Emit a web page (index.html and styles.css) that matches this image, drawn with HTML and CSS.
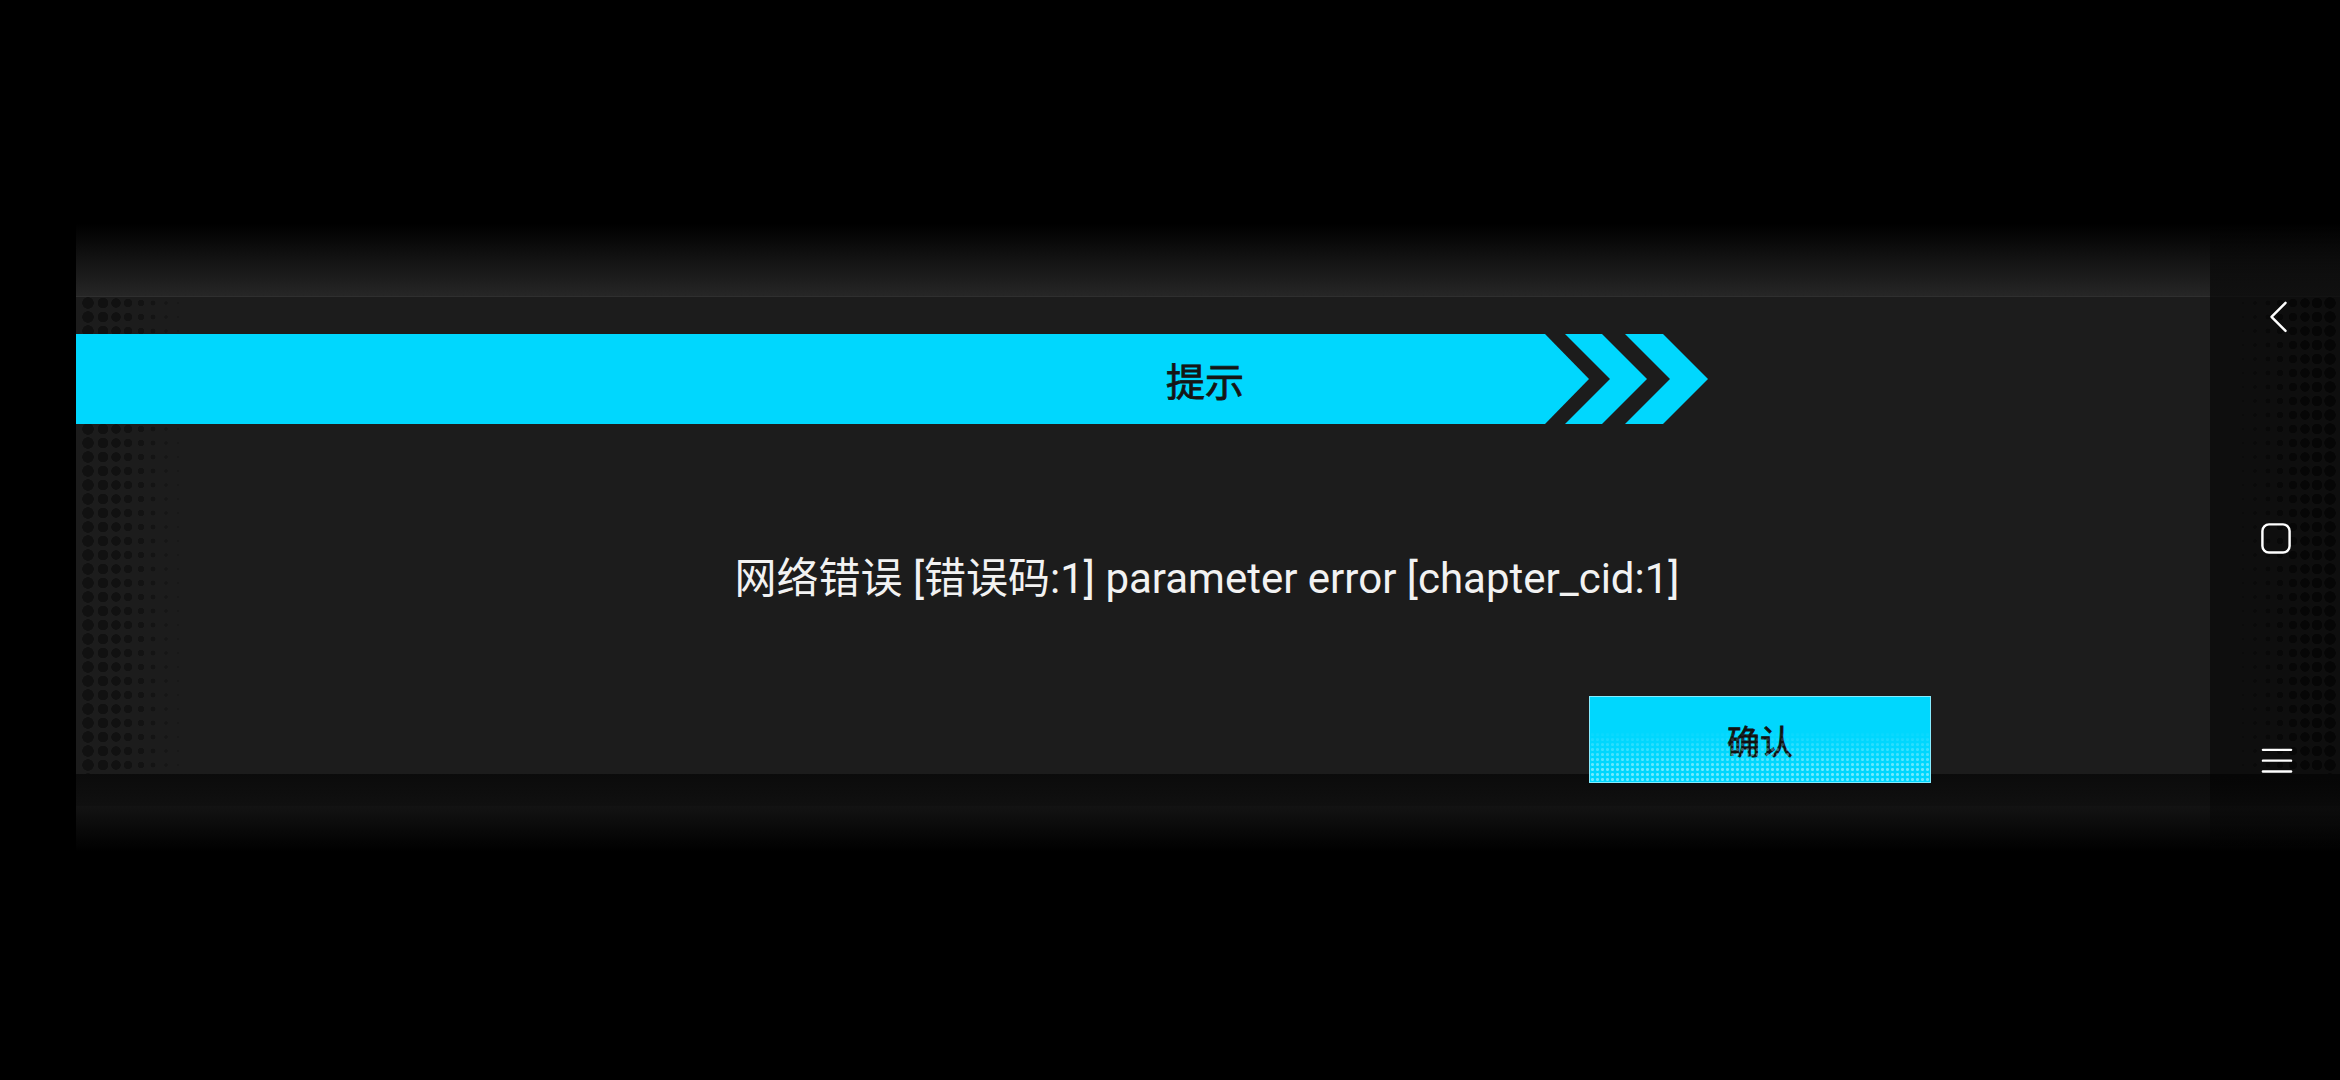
FILE: index.html
```html
<!DOCTYPE html>
<html lang="zh-CN">
<head>
  <meta charset="UTF-8">
  <meta name="viewport" content="width=device-width, initial-scale=1.0">
  <title>提示</title>
  <link rel="stylesheet" href="styles.css">
</head>
<body>
  <div class="screen">
    <div class="game">
      <div class="top-band"></div>
      <div class="panel">
        <div class="title-bar">
          <div class="title-main"><span class="title-text">提示</span></div>
          <svg class="title-arrows" width="163" height="90" viewBox="0 0 163 90">
            <polygon points="20,0 57,0 102,45 57,90 20,90 65,45"/>
            <polygon points="80,0 118,0 163,45 118,90 80,90 125,45"/>
          </svg>
        </div>
        <p class="message">网络错误 [错误码:1] parameter error [chapter_cid:1]</p>
        <button class="btn-ok">确认</button>
      </div>
      <div class="bottom-band"></div>
      <div class="bottom-fade"></div>
    </div>

    <div class="nav">
      <div class="nav-top"></div>
      <div class="nav-body">
        <svg class="nav-back" width="20" height="34" viewBox="0 0 20 34">
          <polyline points="17,2 2,17 17,32"/>
        </svg>
        <svg class="nav-home" width="32" height="33" viewBox="0 0 32 33">
          <rect x="1.5" y="1.5" width="29" height="30" rx="7"/>
        </svg>
        <svg class="nav-menu" width="32" height="28" viewBox="0 0 32 28">
          <line x1="1" y1="2" x2="31" y2="2"/>
          <line x1="1" y1="13.5" x2="31" y2="13.5"/>
          <line x1="1" y1="25" x2="31" y2="25"/>
        </svg>
      </div>
      <div class="nav-bottom"></div>
    </div>
  </div>
</body>
</html>
```

FILE: styles.css
```css
* {
  box-sizing: border-box;
}

body {
  margin: 0;
  padding: 0;
  width: 2340px;
  height: 1080px;
  overflow: hidden;
  background-color: #000;
  font-family: Roboto, "Noto Sans CJK SC", sans-serif;
}

.screen {
  position: relative;
  height: 1080px;
  padding-top: 224px;
}

.game {
  margin-left: 76px;
}

.top-band {
  height: 73px;
  background: linear-gradient(#000, #262626);
  border-bottom: 1px solid #2f2f2f;
}

/* halftone dots fading to the right */
.panel {
  height: 477px;
  padding-top: 37px;
  background-color: #1c1c1c;
  background-image:
    radial-gradient(circle at 7px 7px, #111 5.5px, transparent 6px),
    radial-gradient(circle at 7px 7px, #111 5px, transparent 5.5px),
    radial-gradient(circle at 7px 7px, #111 4.5px, transparent 5px),
    radial-gradient(circle at 7px 7px, #121212 4px, transparent 4.5px),
    radial-gradient(circle at 7px 7px, #131313 3px, transparent 3.5px),
    radial-gradient(circle at 7px 7px, #141414 2.2px, transparent 2.7px),
    radial-gradient(circle at 7px 7px, #161616 1.5px, transparent 2px),
    radial-gradient(circle at 7px 7px, #181818 1px, transparent 1.5px);
  background-size: 14px 14px;
  background-repeat: repeat-y;
  background-position: 5px -1px, 20px -1px, 33px -1px, 45px -1px, 58px -1px, 70px -1px, 83px -1px, 95px -1px;
}

.title-bar {
  display: flex;
  height: 90px;
}

.title-main {
  display: flex;
  align-items: center;
  width: 1513px;
  height: 90px;
  padding-left: 1090px;
  background-color: #00d7fe;
  clip-path: polygon(0 0, 1469px 0, 100% 50%, 1469px 100%, 0 100%);
}

.title-text {
  font-family: "Noto Sans CJK SC", sans-serif;
  font-size: 39px;
  font-weight: 400;
  -webkit-text-stroke: 0.8px #151515;
  color: #151515;
  line-height: 1;
}

.title-arrows {
  margin-left: -44px;
  fill: #00d7fe;
}

.message {
  margin: 130px 0 0 331px;
  width: 1600px;
  text-align: center;
  font-size: 42px;
  line-height: 50px;
  color: #f2f2f2;
}

.btn-ok {
  position: relative;
  display: block;
  margin: 92px 0 0 1513px;
  width: 342px;
  height: 87px;
  padding: 0;
  border: 1px solid #86ecff;
  background-color: #00d7fe;
  font-family: "Noto Sans CJK SC", sans-serif;
  font-size: 33px;
  font-weight: 400;
  -webkit-text-stroke: 0.8px #111;
  color: #111;
  overflow: hidden;
}

.btn-ok::after {
  content: "";
  position: absolute;
  inset: 0;
  background-image: radial-gradient(circle at 2.5px 2.5px, rgba(150, 240, 255, 0.75) 1.2px, transparent 1.8px);
  background-size: 5px 5px;
  -webkit-mask-image: linear-gradient(to top, #000 15%, transparent 60%);
  mask-image: linear-gradient(to top, #000 15%, transparent 60%);
}

.bottom-band {
  height: 32px;
  background: linear-gradient(#0b0b0b, #101010);
}

.bottom-fade {
  height: 46px;
  background: linear-gradient(#131313, #000);
}

/* system navigation strip */
.nav {
  position: absolute;
  top: 224px;
  right: 0;
  width: 130px;
  display: flex;
  flex-direction: column;
}

.nav-top {
  height: 73px;
  background: linear-gradient(rgba(0, 0, 0, 0.2), rgba(0, 0, 0, 0.6));
}

.nav-body {
  display: flex;
  flex-direction: column;
  align-items: flex-start;
  height: 477px;
  padding-top: 4px;
  background-color: rgba(0, 0, 0, 0.5);
  background-image:
    radial-gradient(circle at 7px 7px, #0b0b0b 1px, transparent 1.5px),
    radial-gradient(circle at 7px 7px, #0a0a0a 1.5px, transparent 2px),
    radial-gradient(circle at 7px 7px, #090909 2.2px, transparent 2.7px),
    radial-gradient(circle at 7px 7px, #080808 3px, transparent 3.5px),
    radial-gradient(circle at 7px 7px, #070707 4px, transparent 4.5px),
    radial-gradient(circle at 7px 7px, #060606 4.5px, transparent 5px),
    radial-gradient(circle at 7px 7px, #060606 5px, transparent 5.5px),
    radial-gradient(circle at 7px 7px, #060606 5.5px, transparent 6px);
  background-size: 14px 14px;
  background-repeat: repeat-y;
  background-position: 26px -1px, 38px -1px, 51px -1px, 63px -1px, 76px -1px, 88px -1px, 100px -1px, 113px -1px;
}

.nav-bottom {
  height: 76px;
  background: linear-gradient(rgba(0, 0, 0, 0.5), rgba(0, 0, 0, 0.2));
}

.nav-body svg {
  fill: none;
  stroke: #fff;
  stroke-width: 2.6;
  stroke-linecap: round;
  stroke-linejoin: round;
}

.nav-back {
  margin-left: 59px;
}

.nav-home {
  margin-left: 50px;
  margin-top: 190px;
}

.nav-menu {
  margin-left: 51px;
  margin-top: 194px;
}
```
